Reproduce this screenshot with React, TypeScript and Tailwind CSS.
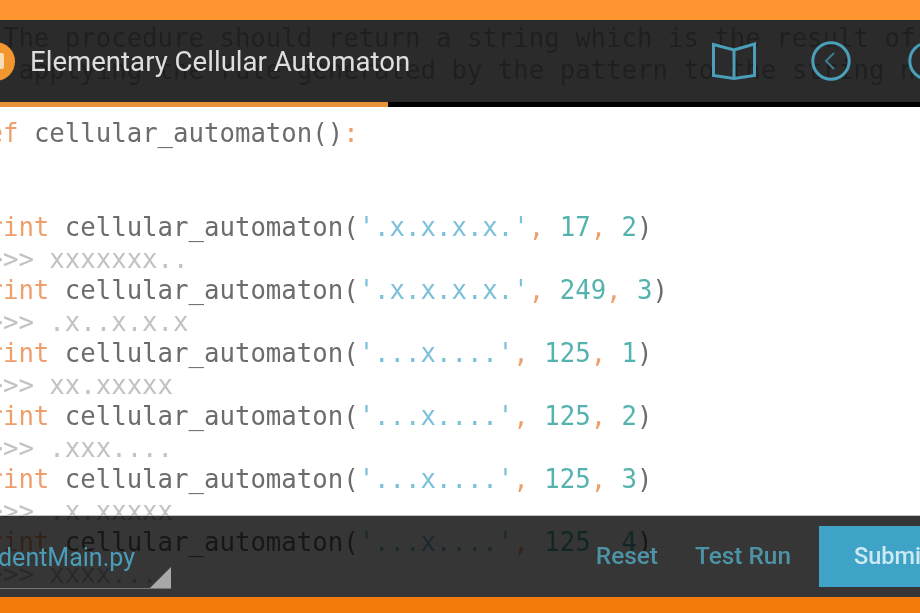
import React from 'react';

const codeFont = "font-['DejaVu_Sans_Mono','Liberation_Mono',monospace]";
const uiFont = "font-['Roboto','Noto_Sans',sans-serif]";

type Call = { input: string; a: string; b: string; output: string };

const calls: Call[] = [
  { input: '.x.x.x.x.', a: '17', b: '2', output: 'xxxxxxx..' },
  { input: '.x.x.x.x.', a: '249', b: '3', output: '.x..x.x.x' },
  { input: '...x....', a: '125', b: '1', output: 'xx.xxxxx' },
  { input: '...x....', a: '125', b: '2', output: '.xxx....' },
  { input: '...x....', a: '125', b: '3', output: '.x.xxxxx' },
  { input: '...x....', a: '125', b: '4', output: 'xxxx....' },
];

function Comma() {
  return <span className="text-[#ee9f6c]">, </span>;
}

function CodeSheet() {
  return (
    <div className={`-ml-[24px] pt-[3px] whitespace-pre text-[25.7px] leading-[31.5px] text-[#6c6c6c] ${codeFont}`}>
      <div className="text-[#b8b8b8]">{'# The procedure should return a string which is the result of'}</div>
      <div className="text-[#b8b8b8]">{'#  applying the rule generated by the pattern to the string n'}</div>
      <div>&nbsp;</div>
      <div>
        <span className="text-[#ee9f6c]">def </span>cellular_automaton()<span className="text-[#ee9f6c]">:</span>
      </div>
      <div>&nbsp;</div>
      <div>&nbsp;</div>
      {calls.map((call, i) => (
        <React.Fragment key={i}>
          <div>
            <span className="text-[#ee9f6c]">print </span>cellular_automaton(
            <span className="text-[#7cc0da]">'{call.input}'</span>
            <Comma />
            <span className="text-[#55b3ad]">{call.a}</span>
            <Comma />
            <span className="text-[#55b3ad]">{call.b}</span>)
          </div>
          <div className="text-[#c2c2c2]">{`#>>> ${call.output}`}</div>
        </React.Fragment>
      ))}
    </div>
  );
}

function CircleChevron({ right }: { right?: boolean }) {
  return (
    <svg width="40" height="40" viewBox="0 0 40 40" fill="none" stroke="#4a9fbb" className="shrink-0">
      <circle cx="20" cy="20" r="18.2" strokeWidth="3" />
      <path d={right ? 'M17 12l8 8-8 8' : 'M23 12l-8 8 8 8'} strokeWidth="2" className="opacity-70" />
    </svg>
  );
}

function Header() {
  return (
    <div className="absolute inset-x-0 top-0 flex h-[87px] flex-col bg-black/[0.83]">
      <div className="flex flex-1 items-center justify-between">
        <div className="flex items-center gap-[15px]">
          <div className="-ml-[20px] flex h-[39px] w-[39px] shrink-0 items-center justify-center rounded-full bg-[#f2962f]">
            <div className="ml-[1px] h-[16px] w-[16px] rounded-[2px] bg-[#f7dcb4]" />
          </div>
          <span className={`pt-[2px] text-[27.6px] leading-none text-[#dedede] ${uiFont}`}>Elementary Cellular Automaton</span>
        </div>
        <div className="-mr-[24px] flex items-center">
          <svg width="44" height="38" viewBox="0 0 44 38" fill="none" stroke="#4a9fbb" strokeWidth="3" className="mr-[55px] shrink-0">
            <path d="M1.5 2.5L22 8L42.5 2V33.5L22 36.5L1.5 33.5Z" />
            <path d="M22 8V36" />
          </svg>
          <CircleChevron />
          <div className="ml-[57px]">
            <CircleChevron right />
          </div>
        </div>
      </div>
      <div className="flex h-[5px] shrink-0">
        <div className="w-[392px] bg-[#e8933a]" />
        <div className="flex-1 bg-black" />
      </div>
    </div>
  );
}

function Footer() {
  return (
    <div className={`absolute inset-x-0 bottom-0 flex h-[82px] items-start justify-between border-t border-[#c4c4c4] bg-black/[0.79] pt-[10px] ${uiFont}`}>
      <div className="relative flex h-[63px] w-[175px] items-center justify-end overflow-hidden border-b border-[#777] pr-[36px] pt-[2px]">
        <span className="whitespace-nowrap text-[25px] text-[#4a9db8]">StudentMain.py</span>
        <svg width="21" height="21" viewBox="0 0 21 21" className="absolute bottom-0 right-0">
          <path d="M21 0V21H0Z" fill="#a8a8a8" />
        </svg>
      </div>
      <div className="-mr-[26px] flex items-start">
        <span className="mt-[15px] text-[24.4px] leading-[30px] font-medium text-[#4d93a8]">Reset</span>
        <span className="ml-[37px] mt-[15px] text-[24.4px] leading-[30px] font-medium text-[#4d93a8]">Test Run</span>
        <div className="ml-[28px] flex h-[61px] w-[131px] shrink-0 items-center bg-[#3fa3c7] pl-[35px] text-[23.5px] font-medium text-[#cdeaf3]">
          Submit
        </div>
      </div>
    </div>
  );
}

export default function App() {
  return (
    <div className="h-[613px] w-[920px] overflow-hidden">
      {/* sized past the window so the soft focus does not fade at the edges */}
      <div className="-m-[4px] flex h-[621px] w-[928px] flex-col bg-[#f37a0c] blur-[0.6px]">
        <div className="h-[24px] shrink-0 bg-[#ff9530]" />
        <div className="relative flex-1 overflow-hidden bg-white">
          <CodeSheet />
          <Header />
          <Footer />
        </div>
        <div className="h-[20px] shrink-0 bg-[#f37a0c]" />
      </div>
    </div>
  );
}
